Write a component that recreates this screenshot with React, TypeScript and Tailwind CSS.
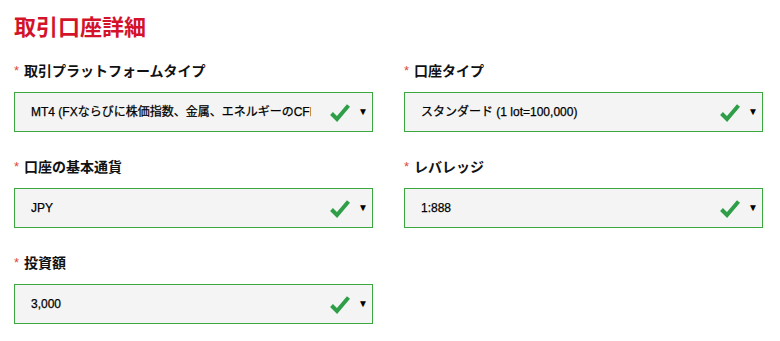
import React from "react";

const font = { fontFamily: '"Liberation Sans", "Noto Sans CJK JP", sans-serif' };

function Check() {
  return (
    <svg width="20" height="19" viewBox="0 0 20 19" className="shrink-0">
      <path d="M1.5 10.5 L7 16 L18.5 2.5" fill="none" stroke="#2f9e48" strokeWidth="4" strokeLinecap="butt" strokeLinejoin="miter" />
    </svg>
  );
}

function Field({ label, value }: { label: string; value: string }) {
  return (
    <div className="flex flex-col">
      <div className="flex items-center h-[20px]">
        <span className="text-[13px] text-[#e0473a] w-[10px] leading-none mt-[-2px]">*</span>
        <span className="text-[14px] font-bold text-[#111] leading-[20px]">{label}</span>
      </div>
      <div className="mt-[11px] h-[40px] border border-[#3aa83f] bg-[#f4f4f4] flex items-center pl-[16px] pr-[4px]">
        <span className="flex-1 min-w-0 overflow-hidden whitespace-nowrap text-[12px] text-black [-webkit-text-stroke:0.25px_#000]">{value}</span>
        <div className="ml-[19px] flex items-center">
          <Check />
          <span className="ml-[8px] text-[10px] text-black leading-none">▼</span>
        </div>
      </div>
    </div>
  );
}

export default function App() {
  return (
    <div className="w-[780px] h-[341px] bg-white pl-[14px] pr-[17px] pt-[14px]" style={font}>
      <h1 className="text-[22px] font-bold text-[#d4132b] leading-[28px] mb-[19px]">取引口座詳細</h1>
      <div className="grid grid-cols-[359px_359px] gap-x-[31px] gap-y-[25px]">
        <Field label="取引プラットフォームタイプ" value="MT4 (FXならびに株価指数、金属、エネルギーのCFD)" />
        <Field label="口座タイプ" value="スタンダード (1 lot=100,000)" />
        <Field label="口座の基本通貨" value="JPY" />
        <Field label="レバレッジ" value="1:888" />
        <Field label="投資額" value="3,000" />
      </div>
    </div>
  );
}
